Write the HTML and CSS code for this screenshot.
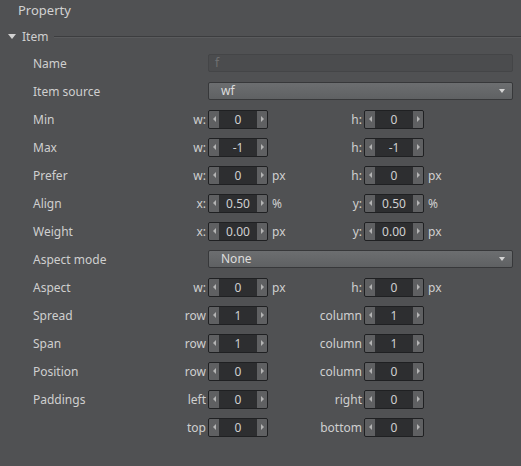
FILE: index.html
```html
<!DOCTYPE html>
<html>
<head>
<meta charset="utf-8">
<link rel="stylesheet" href="styles.css">
</head>
<body>
<div class="panel">
  <div class="title">Property</div>
  <div class="section-head">
    <span class="tri"></span>
    <span class="section-name">Item</span>
    <span class="rule"></span>
  </div>

  <div class="row">
    <div class="label">Name</div>
    <div class="wide field disabled">f</div>
  </div>

  <div class="row">
    <div class="label">Item source</div>
    <div class="wide combo"><span>wf</span><span class="carat"></span></div>
  </div>

  <div class="row">
    <div class="label">Min</div>
    <div class="sub">w:</div>
    <div class="spin"><span class="btn l"></span><span class="val">0</span><span class="btn r"></span></div>
    <div class="unit"></div>
    <div class="sub">h:</div>
    <div class="spin"><span class="btn l"></span><span class="val">0</span><span class="btn r"></span></div>
  </div>

  <div class="row">
    <div class="label">Max</div>
    <div class="sub">w:</div>
    <div class="spin"><span class="btn l"></span><span class="val">-1</span><span class="btn r"></span></div>
    <div class="unit"></div>
    <div class="sub">h:</div>
    <div class="spin"><span class="btn l"></span><span class="val">-1</span><span class="btn r"></span></div>
  </div>

  <div class="row">
    <div class="label">Prefer</div>
    <div class="sub">w:</div>
    <div class="spin"><span class="btn l"></span><span class="val">0</span><span class="btn r"></span></div>
    <div class="unit">px</div>
    <div class="sub">h:</div>
    <div class="spin"><span class="btn l"></span><span class="val">0</span><span class="btn r"></span></div>
    <div class="unit">px</div>
  </div>

  <div class="row">
    <div class="label">Align</div>
    <div class="sub">x:</div>
    <div class="spin"><span class="btn l"></span><span class="val">0.50</span><span class="btn r"></span></div>
    <div class="unit">%</div>
    <div class="sub">y:</div>
    <div class="spin"><span class="btn l"></span><span class="val">0.50</span><span class="btn r"></span></div>
    <div class="unit">%</div>
  </div>

  <div class="row">
    <div class="label">Weight</div>
    <div class="sub">x:</div>
    <div class="spin"><span class="btn l"></span><span class="val">0.00</span><span class="btn r"></span></div>
    <div class="unit">px</div>
    <div class="sub">y:</div>
    <div class="spin"><span class="btn l"></span><span class="val">0.00</span><span class="btn r"></span></div>
    <div class="unit">px</div>
  </div>

  <div class="row">
    <div class="label">Aspect mode</div>
    <div class="wide combo"><span>None</span><span class="carat"></span></div>
  </div>

  <div class="row">
    <div class="label">Aspect</div>
    <div class="sub">w:</div>
    <div class="spin"><span class="btn l"></span><span class="val">0</span><span class="btn r"></span></div>
    <div class="unit">px</div>
    <div class="sub">h:</div>
    <div class="spin"><span class="btn l"></span><span class="val">0</span><span class="btn r"></span></div>
    <div class="unit">px</div>
  </div>

  <div class="row">
    <div class="label">Spread</div>
    <div class="sub">row</div>
    <div class="spin"><span class="btn l"></span><span class="val">1</span><span class="btn r"></span></div>
    <div class="unit"></div>
    <div class="sub">column</div>
    <div class="spin"><span class="btn l"></span><span class="val">1</span><span class="btn r"></span></div>
  </div>

  <div class="row">
    <div class="label">Span</div>
    <div class="sub">row</div>
    <div class="spin"><span class="btn l"></span><span class="val">1</span><span class="btn r"></span></div>
    <div class="unit"></div>
    <div class="sub">column</div>
    <div class="spin"><span class="btn l"></span><span class="val">1</span><span class="btn r"></span></div>
  </div>

  <div class="row">
    <div class="label">Position</div>
    <div class="sub">row</div>
    <div class="spin"><span class="btn l"></span><span class="val">0</span><span class="btn r"></span></div>
    <div class="unit"></div>
    <div class="sub">column</div>
    <div class="spin"><span class="btn l"></span><span class="val">0</span><span class="btn r"></span></div>
  </div>

  <div class="row">
    <div class="label">Paddings</div>
    <div class="sub">left</div>
    <div class="spin"><span class="btn l"></span><span class="val">0</span><span class="btn r"></span></div>
    <div class="unit"></div>
    <div class="sub">right</div>
    <div class="spin"><span class="btn l"></span><span class="val">0</span><span class="btn r"></span></div>
  </div>

  <div class="row">
    <div class="label"></div>
    <div class="sub">top</div>
    <div class="spin"><span class="btn l"></span><span class="val">0</span><span class="btn r"></span></div>
    <div class="unit"></div>
    <div class="sub">bottom</div>
    <div class="spin"><span class="btn l"></span><span class="val">0</span><span class="btn r"></span></div>
  </div>
</div>
</body>
</html>
```

FILE: styles.css
```css
html, body {
  margin: 0;
  padding: 0;
  background: #505153;
  height: 100%;
}

body {
  font-family: "Noto Sans", "DejaVu Sans", sans-serif;
  font-size: 12px;
  color: #cfcfcf;
}

.panel {
  padding: 0 8px 0 0;
}

.title {
  height: 24px;
  line-height: 20px;
  padding-left: 18px;
  font-size: 13px;
  color: #d2d2d2;
}

.section-head {
  height: 25px;
  display: flex;
  align-items: center;
  padding-left: 8px;
  margin-right: -8px;
}

.tri {
  width: 0;
  height: 0;
  border-left: 4px solid transparent;
  border-right: 4px solid transparent;
  border-top: 5px solid #d2d2d2;
  margin-right: 6px;
}

.section-name {
  margin-right: 6px;
}

.rule {
  flex: 1;
  height: 0;
  border-top: 1px solid #3c3d3f;
  border-bottom: 1px solid #5a5b5d;
}

.row {
  display: grid;
  grid-template-columns: 132px 43px 60px 32px 64px 60px auto;
  align-items: center;
  height: 28px;
  padding-left: 33px;
}

.label {
  white-space: nowrap;
}

.sub {
  text-align: right;
  padding-right: 2px;
  white-space: nowrap;
}

.unit {
  padding-left: 4px;
}

.wide {
  grid-column: 3 / -1;
  height: 18px;
  box-sizing: border-box;
  border-radius: 2px;
}

.field {
  background: #4b4c4e;
  border: 1px solid #444547;
  padding-left: 6px;
  line-height: 16px;
}

.disabled {
  color: #6e6f71;
}

.combo {
  display: flex;
  align-items: center;
  justify-content: space-between;
  background: linear-gradient(#6c6e70, #5f6163);
  border: 1px solid #37383a;
  padding: 0 7px 0 12px;
  line-height: 16px;
  color: #dcdcdc;
}

.carat {
  width: 0;
  height: 0;
  border-left: 3.5px solid transparent;
  border-right: 3.5px solid transparent;
  border-top: 4px solid #d4d4d4;
}

.spin {
  display: flex;
  height: 19px;
  box-sizing: border-box;
  border: 1px solid #1f2022;
  border-radius: 2px;
  background: #2d2e30;
  overflow: hidden;
}

.btn {
  width: 10px;
  background: #5f6062;
  display: flex;
  align-items: center;
  justify-content: center;
}

.btn.l::after {
  content: "";
  border-top: 3px solid transparent;
  border-bottom: 3px solid transparent;
  border-right: 3px solid #b4b4b4;
}

.btn.r::after {
  content: "";
  border-top: 3px solid transparent;
  border-bottom: 3px solid transparent;
  border-left: 3px solid #b4b4b4;
}

.val {
  flex: 1;
  text-align: center;
  line-height: 17px;
  color: #d0d0d0;
}
```
